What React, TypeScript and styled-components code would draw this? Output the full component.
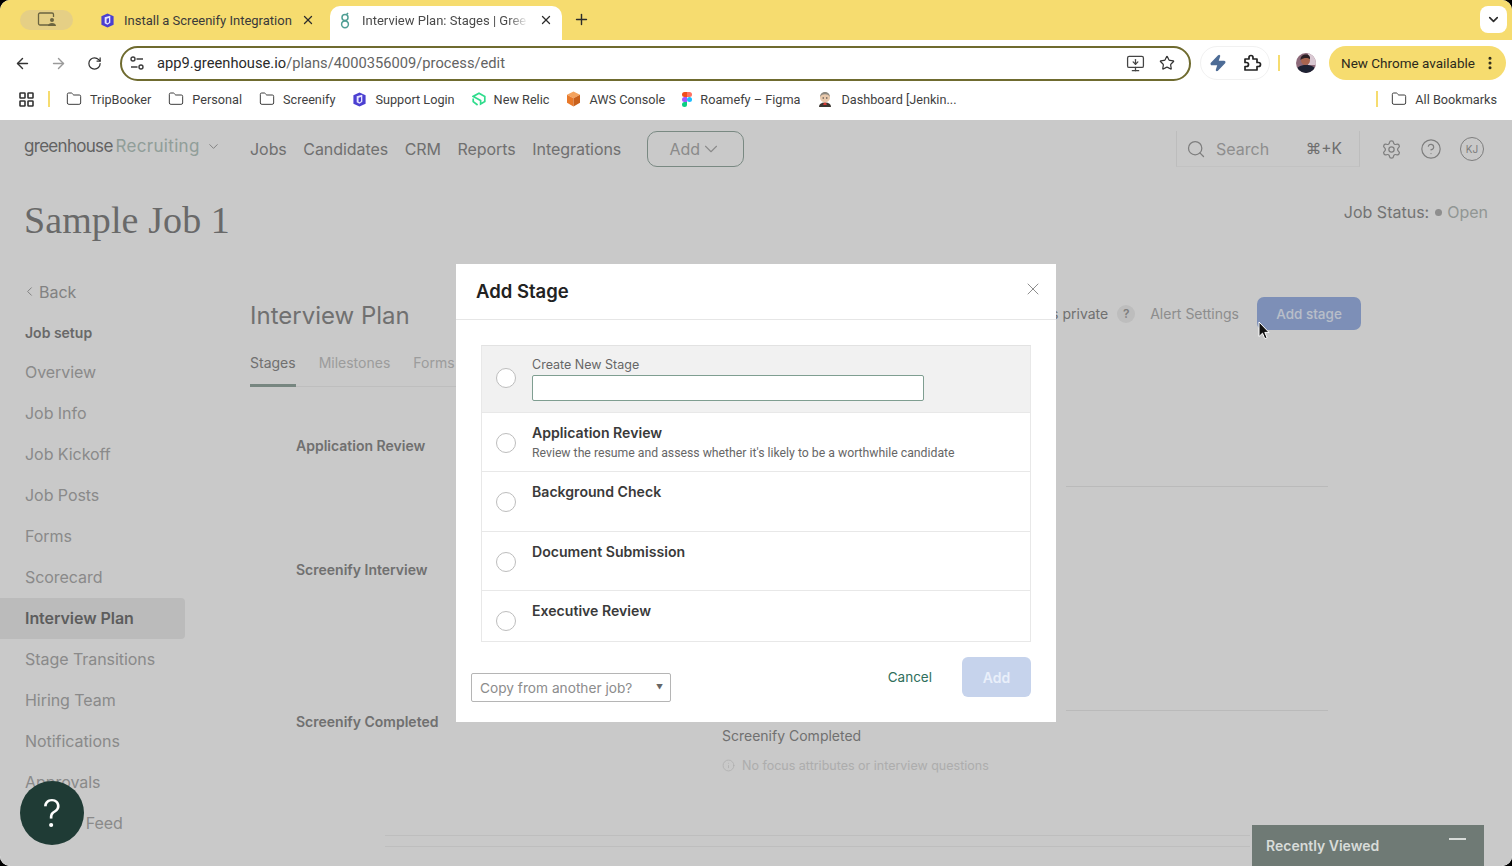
import styled, { createGlobalStyle } from 'styled-components';
import {
  ArrowLeft,
  ArrowRight,
  ChevronDown,
  ChevronLeft,
  CircleHelp,
  EllipsisVertical,
  Folder,
  Info,
  MonitorDown,
  Plus,
  RotateCw,
  Search,
  Settings,
  Star,
  X,
  Zap,
} from 'lucide-react';

const SIDEBAR_ITEMS = [
  'Overview',
  'Job Info',
  'Job Kickoff',
  'Job Posts',
  'Forms',
  'Scorecard',
  'Interview Plan',
  'Stage Transitions',
  'Hiring Team',
  'Notifications',
  'Approvals',
  'Activity Feed',
];

const STAGE_OPTIONS = [
  { name: 'Application Review', hint: "Review the resume and assess whether it's likely to be a worthwhile candidate" },
  { name: 'Background Check' },
  { name: 'Document Submission' },
  { name: 'Executive Review' },
];

function ScreenifyLogo({ size = 15 }: { size?: number }) {
  return (
    <svg width={size} height={size} viewBox="0 0 16 16">
      <path d="M8 .5 14.5 3.5v9L8 15.5 1.5 12.5v-9z" fill="#4b3fd1" />
      <path d="M5 4.5 11 3v7.5L8 12.5 5 11z" fill="#e6e4ff" />
      <path d="M7 6 9.6 5.3v4.6L8 11 7 10.3z" fill="#4b3fd1" />
    </svg>
  );
}

function GreenhouseMark() {
  return (
    <svg width="12" height="17" viewBox="0 0 12 17" fill="none" stroke="#4f9e94" strokeWidth="1.5">
      <circle cx="6" cy="5.5" r="3" />
      <circle cx="6" cy="12.3" r="3.4" />
      <path d="M7.6 2.6 9 1" />
    </svg>
  );
}

function TuneIcon() {
  return (
    <svg width="16" height="14" viewBox="0 0 16 14" fill="none" stroke="#3c3c3c" strokeWidth="1.4">
      <circle cx="4" cy="3" r="2" />
      <path d="M7.5 3H14" />
      <circle cx="12" cy="11" r="2" />
      <path d="M2 11h6.5" />
    </svg>
  );
}

function AppsIcon() {
  return (
    <svg width="15" height="15" viewBox="0 0 15 15" fill="none" stroke="#333" strokeWidth="1.6">
      <rect x="1" y="1" width="5" height="5" rx=".6" />
      <rect x="9" y="1" width="5" height="5" rx=".6" />
      <rect x="1" y="9" width="5" height="5" rx=".6" />
      <rect x="9" y="9" width="5" height="5" rx=".6" />
    </svg>
  );
}

function NewRelicLogo() {
  return (
    <svg width="14" height="15" viewBox="0 0 14 15" fill="none" stroke="#2fdc8c" strokeWidth="1.7">
      <path d="M7 1.2 12.8 4.4v5.2L8.6 12V8.4L5 6.4 1.2 4.4zM1.2 6.6v3l4.4 3.4" />
    </svg>
  );
}

function AwsLogo() {
  return (
    <svg width="15" height="16" viewBox="0 0 15 16">
      <path d="M7.5.5 14 3.8 7.5 7.2 1 3.8z" fill="#f4a35e" />
      <path d="M1 3.8v8l6.5 3.7V7.2z" fill="#e8792a" />
      <path d="M14 3.8v8l-6.5 3.7V7.2z" fill="#c9611c" />
    </svg>
  );
}

function FigmaLogo() {
  return (
    <svg width="10" height="15" viewBox="0 0 10 15">
      <path d="M5 0H2.5a2.5 2.5 0 0 0 0 5H5z" fill="#f24e1e" />
      <path d="M5 0h2.5a2.5 2.5 0 0 1 0 5H5z" fill="#ff7262" />
      <path d="M5 5H2.5a2.5 2.5 0 0 0 0 5H5z" fill="#a259ff" />
      <circle cx="7.5" cy="7.5" r="2.5" fill="#1abcfe" />
      <path d="M5 10H2.5A2.5 2.5 0 1 0 5 12.5z" fill="#0acf83" />
    </svg>
  );
}

function JenkinsLogo() {
  return (
    <svg width="16" height="16" viewBox="0 0 16 16">
      <path d="M2 16c0-3 2-4.500 6-4.500s6 1.500 6 4.500z" fill="#3a3530" />
      <path d="M7 11.500h2l.8 2.500H6.200z" fill="#d33833" />
      <circle cx="8" cy="6.500" r="5" fill="#e9c9ac" />
      <path d="M3.200 6C3 2.500 5.500 1 8 1s5 1.500 4.800 5c-1-2-2.500-2.700-4.800-2.700S4.200 4 3.200 6z" fill="#8c8880" />
      <circle cx="6.200" cy="7" r=".7" fill="#333" />
      <circle cx="9.800" cy="7" r=".7" fill="#333" />
    </svg>
  );
}

function ProfileWindowIcon() {
  return (
    <svg width="20" height="16" viewBox="0 0 20 16" fill="none">
      <path d="M12 13H3a1.500 1.500 0 0 1-1.500-1.500v-9A1.500 1.500 0 0 1 3 1h12a1.500 1.500 0 0 1 1.500 1.500V5" stroke="#6b6440" strokeWidth="1.300" />
      <circle cx="15" cy="8" r="2" fill="#6b6440" />
      <path d="M11 14c0-2 1.800-3 4-3s4 1 4 3z" fill="#6b6440" />
    </svg>
  );
}

function ExtensionIcon() {
  return (
    <svg width="20" height="20" viewBox="0 0 20 20" fill="none" stroke="#222" strokeWidth="1.700" strokeLinejoin="round">
      <path d="M3 6h4V4.500a2 2 0 0 1 4 0V6h4v3.500h1.500a2 2 0 0 1 0 4H15V17H3v-3.500h1.500a2 2 0 0 0 0-4H3z" />
    </svg>
  );
}

function Avatar() {
  return (
    <svg width="20" height="20" viewBox="0 0 20 20">
      <defs>
        <clipPath id="avatar-clip">
          <circle cx="10" cy="10" r="10" />
        </clipPath>
      </defs>
      <g clipPath="url(#avatar-clip)">
        <rect width="20" height="20" fill="#8d6a7a" />
        <rect x="12" width="8" height="12" fill="#d9c8d2" />
        <circle cx="9.500" cy="7.500" r="4.500" fill="#a8654f" />
        <path d="M4.500 7C4.500 3 7 1.500 10 1.500S14.500 3.500 14 6.500C12 4.500 8 4.500 4.500 7z" fill="#2b2024" />
        <path d="M0 20c0-6 4-8 10-8s10 2 10 8z" fill="#1d2233" />
      </g>
    </svg>
  );
}

function Pointer() {
  return (
    <svg width="12" height="19" viewBox="0 0 12 19">
      <path d="M1 1v14.500l3.500-3.300 2.300 5.500 2.300-1-2.300-5.300H11z" fill="#111" stroke="#fff" strokeWidth="1" />
    </svg>
  );
}

export default function App() {
  return (
    <>
      <GlobalStyle />
      <Frame>
        <TabStrip>
          <ProfilePill>
            <ProfileWindowIcon />
          </ProfilePill>
          <Tab>
            <ScreenifyLogo />
            <TabTitle>Install a Screenify Integration</TabTitle>
            <X size={14} strokeWidth={2.2} />
          </Tab>
          <Tab $active>
            <GreenhouseMark />
            <TabTitle $active>Interview Plan: Stages | Gree</TabTitle>
            <X size={14} strokeWidth={2.2} />
          </Tab>
          <NewTab>
            <Plus size={17} strokeWidth={2} />
          </NewTab>
          <TabSearch>
            <ChevronDown size={15} strokeWidth={2.6} />
          </TabSearch>
        </TabStrip>

        <Toolbar>
          <NavIcon><ArrowLeft size={17} strokeWidth={2} /></NavIcon>
          <NavIcon $muted><ArrowRight size={17} strokeWidth={2} /></NavIcon>
          <NavIcon><RotateCw size={15} strokeWidth={2} /></NavIcon>
          <Omnibox>
            <TuneIcon />
            <Url>
              app9.greenhouse.io<UrlPath>/plans/4000356009/process/edit</UrlPath>
            </Url>
            <MonitorDown size={19} strokeWidth={1.6} color="#444" />
            <Star size={16} strokeWidth={1.8} color="#333" />
          </Omnibox>
          <ExtensionPill>
            <Zap size={18} fill="#4d6c96" color="#4d6c96" />
            <ExtensionIcon />
          </ExtensionPill>
          <ToolbarDivider />
          <Avatar />
          <UpdateButton>
            New Chrome available
            <EllipsisVertical size={16} strokeWidth={2.6} />
          </UpdateButton>
        </Toolbar>

        <Bookmarks>
          <AppsIcon />
          <BookmarkDivider />
          <Bookmark><Folder size={16} strokeWidth={1.5} />TripBooker</Bookmark>
          <Bookmark><Folder size={16} strokeWidth={1.5} />Personal</Bookmark>
          <Bookmark><Folder size={16} strokeWidth={1.5} />Screenify</Bookmark>
          <Bookmark><ScreenifyLogo />Support Login</Bookmark>
          <Bookmark><NewRelicLogo />New Relic</Bookmark>
          <Bookmark><AwsLogo />AWS Console</Bookmark>
          <Bookmark><FigmaLogo />Roamefy – Figma</Bookmark>
          <Bookmark><JenkinsLogo />Dashboard [Jenkin...</Bookmark>
          <BookmarkSpacer />
          <BookmarkDivider $tight />
          <Bookmark><Folder size={16} strokeWidth={1.5} />All Bookmarks</Bookmark>
        </Bookmarks>

        <Page>
          <TopNav>
            <Brand>
              <BrandName>greenhouse</BrandName>
              <BrandProduct>Recruiting</BrandProduct>
              <ChevronDown size={15} strokeWidth={1.4} color="#999" />
            </Brand>
            <NavLinks>
              <NavLink>Jobs</NavLink>
              <NavLink>Candidates</NavLink>
              <NavLink>CRM</NavLink>
              <NavLink>Reports</NavLink>
              <NavLink>Integrations</NavLink>
            </NavLinks>
            <AddMenu>
              Add
              <ChevronDown size={22} strokeWidth={1.2} />
            </AddMenu>
            <NavRight>
              <SearchBox>
                <Search size={20} strokeWidth={1.5} />
                <SearchLabel>Search</SearchLabel>
                <SearchKeys>⌘+K</SearchKeys>
              </SearchBox>
              <Settings size={21} strokeWidth={1.4} />
              <CircleHelp size={22} strokeWidth={1.3} />
              <Initials>KJ</Initials>
            </NavRight>
          </TopNav>

          <JobHeader>
            <JobTitle>Sample Job 1</JobTitle>
            <JobStatus>
              Job Status:
              <StatusDot />
              <StatusValue>Open</StatusValue>
            </JobStatus>
          </JobHeader>

          <Body>
            <Sidebar>
              <BackLink>
                <ChevronLeft size={15} strokeWidth={1.6} />
                Back
              </BackLink>
              <SideHeading>Job setup</SideHeading>
              {SIDEBAR_ITEMS.map((item) => (
                <SideItem key={item} $active={item === 'Interview Plan'}>{item}</SideItem>
              ))}
            </Sidebar>

            <Content>
              <PlanHeader>
                <PlanTitle>Interview Plan</PlanTitle>
                <PlanActions>
                  <PrivateLabel>Interview plans private</PrivateLabel>
                  <QuestionBadge>?</QuestionBadge>
                  <AlertLink>Alert Settings</AlertLink>
                  <AddStageButton>Add stage</AddStageButton>
                </PlanActions>
              </PlanHeader>

              <Tabs>
                <PlanTab $active>Stages</PlanTab>
                <PlanTab>Milestones</PlanTab>
                <PlanTab>Forms</PlanTab>
              </Tabs>

              <StageRow $height={124}>
                <StageName>Application Review</StageName>
                <StageDetail>
                  <StageRule $top={50} />
                </StageDetail>
              </StageRow>
              <StageRow $height={152}>
                <StageName>Screenify Interview</StageName>
                <StageDetail />
              </StageRow>
              <StageRow $height={172}>
                <StageName>Screenify Completed</StageName>
                <StageDetail>
                  <StageRule $top={-2} />
                  <DetailTitle>Screenify Completed</DetailTitle>
                  <DetailNote>
                    <Info size={13} strokeWidth={1.4} />
                    No focus attributes or interview questions
                  </DetailNote>
                </StageDetail>
              </StageRow>
              <FootRule />
              <FootRule />
            </Content>
          </Body>

          <Scrim>
            <Modal>
              <ModalHeader>
                <ModalTitle>Add Stage</ModalTitle>
                <X size={20} strokeWidth={1} color="#777" />
              </ModalHeader>
              <ModalBody>
                <StageList>
                  <StageOption $new>
                    <Radio $new />
                    <OptionText>
                      <NewStageLabel>Create New Stage</NewStageLabel>
                      <NewStageInput />
                    </OptionText>
                  </StageOption>
                  {STAGE_OPTIONS.map((option) => (
                    <StageOption key={option.name}>
                      <Radio />
                      <OptionText>
                        <OptionName>{option.name}</OptionName>
                        {option.hint && <OptionHint>{option.hint}</OptionHint>}
                      </OptionText>
                    </StageOption>
                  ))}
                </StageList>
                <ModalFooter>
                  <CopySelect>
                    Copy from another job?
                    <SelectCaret>▼</SelectCaret>
                  </CopySelect>
                  <CancelLink>Cancel</CancelLink>
                  <ModalAdd>Add</ModalAdd>
                </ModalFooter>
              </ModalBody>
            </Modal>
          </Scrim>

          <CursorMark>
            <Pointer />
          </CursorMark>
          <HelpFab>?</HelpFab>
          <RecentlyViewed>
            Recently Viewed
            <MinimizeBar />
          </RecentlyViewed>
        </Page>
      </Frame>
    </>
  );
}

const GlobalStyle = createGlobalStyle`
  html, body {
    margin: 0;
    height: 100%;
    background: #000;
    overflow: hidden;
  }
  * { box-sizing: border-box; }
`;

const Frame = styled.div`
  width: 1512px;
  height: 866px;
  border-radius: 10px;
  overflow: hidden;
  display: flex;
  flex-direction: column;
  background: #fff;
  font-family: Inter, "Liberation Sans", sans-serif;
`;

const TabStrip = styled.div`
  height: 40px;
  flex-shrink: 0;
  background: #f6dc6f;
  display: flex;
  align-items: flex-end;
  padding-left: 20px;
  color: #2c2c2c;
`;

const ProfilePill = styled.div`
  width: 53px;
  height: 20px;
  margin-bottom: 10px;
  margin-right: 21px;
  border-radius: 10px;
  background: #e5cf85;
  display: flex;
  align-items: center;
  justify-content: center;
`;

const Tab = styled.div<{ $active?: boolean }>`
  width: ${(p) => (p.$active ? '232px' : '236px')};
  height: 34px;
  display: flex;
  align-items: center;
  gap: ${(p) => (p.$active ? '11px' : '9px')};
  padding: ${(p) => (p.$active ? '0 9px 6px 9px' : '0 15px 6px 6px')};
  border-radius: 10px 10px 0 0;
  background: ${(p) => (p.$active ? '#fff' : 'transparent')};
`;

const TabTitle = styled.span<{ $active?: boolean }>`
  flex: 1;
  min-width: 0;
  white-space: nowrap;
  font-family: Roboto, "Liberation Sans", sans-serif;
  font-size: 13px;
  color: ${(p) => (p.$active ? '#4a4a4a' : '#3a3a3a')};
  ${(p) => p.$active && 'mask-image: linear-gradient(to right, #000 88%, transparent 100%);'}
`;

const NewTab = styled.div`
  margin: 0 auto 12px 11px;
  display: flex;
`;

const TabSearch = styled.div`
  width: 27px;
  height: 27px;
  margin: 0 5px 7px 0;
  border-radius: 8px;
  background: #fff;
  display: flex;
  align-items: center;
  justify-content: center;
`;

const Toolbar = styled.div`
  height: 46px;
  flex-shrink: 0;
  display: flex;
  align-items: center;
  padding: 0 6px 0 4px;
  background: #fff;
`;

const NavIcon = styled.div<{ $muted?: boolean }>`
  width: 36px;
  display: flex;
  justify-content: center;
  color: ${(p) => (p.$muted ? '#9a9a9a' : '#333')};
`;

const Omnibox = styled.div`
  width: 1071px;
  height: 35px;
  margin-left: 8px;
  display: flex;
  align-items: center;
  gap: 14px;
  padding: 0 14px 0 7px;
  border: 2px solid #6f6b2f;
  border-radius: 18px;
`;

const Url = styled.div`
  flex: 1;
  margin-left: -2px;
  font-family: Roboto, "Liberation Sans", sans-serif;
  font-size: 14.7px;
  color: #2a2a2a;
`;

const UrlPath = styled.span`
  color: #636363;
`;

const ExtensionPill = styled.div`
  width: 70px;
  height: 34px;
  margin-left: 9px;
  display: flex;
  align-items: center;
  justify-content: space-between;
  padding: 0 7px 0 8px;
  border: 1px solid #f1f1f1;
  border-radius: 17px;
`;

const ToolbarDivider = styled.div`
  width: 2px;
  height: 16px;
  margin: 0 16px 0 8px;
  background: #f6dc6f;
`;

const UpdateButton = styled.div`
  width: 177px;
  height: 34px;
  margin-left: 13px;
  display: flex;
  align-items: center;
  justify-content: space-between;
  padding: 0 8px 0 12px;
  border-radius: 17px;
  background: #f6dc6f;
  font-family: Roboto, "Liberation Sans", sans-serif;
  font-size: 13.5px;
  color: #2c2a1c;
`;

const Bookmarks = styled.div`
  height: 34px;
  flex-shrink: 0;
  display: flex;
  align-items: center;
  padding: 0 15px 8px 19px;
  background: #fff;
  color: #444;
`;

const BookmarkDivider = styled.div<{ $tight?: boolean }>`
  width: 2px;
  height: 16px;
  margin: ${(p) => (p.$tight ? '0 13px 0 0' : '0 16px 0 14px')};
  background: #f6dc6f;
`;

const Bookmark = styled.div`
  display: flex;
  align-items: center;
  gap: 8px;
  margin-right: 17px;
  white-space: nowrap;
  font-family: Roboto, "Liberation Sans", sans-serif;
  font-size: 12.7px;
  color: #3f3f3f;

  &:last-child { margin-right: 0; }
`;

const BookmarkSpacer = styled.div`
  flex: 1;
`;

const Page = styled.div`
  position: relative;
  flex: 1;
  min-height: 0;
  overflow: hidden;
  background: #fff;
`;

const TopNav = styled.header`
  height: 58px;
  display: flex;
  align-items: center;
  padding-left: 24px;
  color: #8a8a8a;
`;

const Brand = styled.div`
  width: 226px;
  display: flex;
  align-items: center;
  gap: 3px;
  margin-top: -6px;
  font-size: 17px;
`;

const BrandName = styled.span`
  letter-spacing: -0.7px;
  color: #7d7d7d;
`;

const BrandProduct = styled.span`
  letter-spacing: 0.3px;
  color: #b7c9c2;
  margin-right: 3px;
`;

const NavLinks = styled.nav`
  display: flex;
  gap: 16.5px;
`;

const NavLink = styled.a`
  font-size: 16px;
  letter-spacing: -0.05px;
  color: #8e8e8e;
`;

const AddMenu = styled.div`
  width: 97px;
  height: 36px;
  margin-left: 26px;
  display: flex;
  align-items: center;
  justify-content: center;
  border: 1px solid #9aaea6;
  border-radius: 10px;
  font-size: 16px;
  color: #b0b0b0;
`;

const NavRight = styled.div`
  margin-left: auto;
  padding-right: 28px;
  display: flex;
  align-items: center;
  gap: 18px;
  color: #a0a0a0;
`;

const SearchBox = styled.div`
  width: 184px;
  height: 36px;
  margin-right: 3px;
  display: flex;
  align-items: center;
  padding: 0 17px 0 9px;
  border-left: 1px solid #f0f0f0;
  border-right: 1px solid #f0f0f0;
  border-bottom: 1px solid #f6f6f6;
`;

const SearchLabel = styled.span`
  flex: 1;
  padding-left: 10px;
  font-size: 16px;
  color: #b4b4b4;
`;

const SearchKeys = styled.span`
  font-size: 15.5px;
  color: #8c8c8c;
`;

const Initials = styled.div`
  width: 24px;
  height: 24px;
  display: flex;
  align-items: center;
  justify-content: center;
  border: 1.2px solid #a0a0a0;
  border-radius: 50%;
  font-size: 10px;
`;

const JobHeader = styled.div`
  height: 93px;
  display: flex;
  justify-content: space-between;
  padding: 20px 24px 0 24px;
`;

const JobTitle = styled.h1`
  margin: 0;
  font-family: "Liberation Serif", serif;
  font-size: 38px;
  line-height: 44px;
  font-weight: 400;
  letter-spacing: 0.1px;
  color: #868686;
`;

const JobStatus = styled.div`
  display: flex;
  align-items: center;
  height: 28px;
  font-size: 16px;
  color: #939393;
`;

const StatusDot = styled.span`
  width: 7px;
  height: 7px;
  margin: 0 5px 0 6px;
  border-radius: 50%;
  background: #b4b4b4;
`;

const StatusValue = styled.span`
  color: #b9bfbc;
`;

const Body = styled.div`
  display: flex;
`;

const Sidebar = styled.aside`
  width: 185px;
  flex-shrink: 0;
`;

const BackLink = styled.div`
  height: 41px;
  display: flex;
  align-items: center;
  gap: 2px;
  padding-left: 22px;
  font-size: 16px;
  color: #a5a5a5;
`;

const SideHeading = styled.div`
  height: 40px;
  display: flex;
  align-items: center;
  padding-left: 25px;
  font-size: 14px;
  font-weight: 600;
  color: #868686;
`;

const SideItem = styled.div<{ $active?: boolean }>`
  height: 41px;
  display: flex;
  align-items: center;
  padding: 0 0 1px 25px;
  font-size: 16px;
  letter-spacing: -0.05px;
  white-space: nowrap;
  border-radius: 0 4px 4px 0;
  font-weight: ${(p) => (p.$active ? 600 : 400)};
  color: ${(p) => (p.$active ? '#767676' : '#afafaf')};
  background: ${(p) => (p.$active ? '#eeeeee' : 'transparent')};
`;

const Content = styled.main`
  width: 1111px;
  margin-left: 65px;
  flex-shrink: 0;
`;

const PlanHeader = styled.div`
  height: 59px;
  padding-top: 26px;
  display: flex;
  align-items: center;
  justify-content: space-between;
`;

const PlanTitle = styled.h2`
  margin: 3px 0 0;
  font-size: 24px;
  font-weight: 400;
  color: #8f8f8f;
`;

const PlanActions = styled.div`
  display: flex;
  align-items: center;
`;

const PrivateLabel = styled.span`
  font-size: 14px;
  color: #8e8e8e;
`;

const QuestionBadge = styled.span`
  width: 18px;
  height: 18px;
  margin: 0 15px 0 9px;
  display: flex;
  align-items: center;
  justify-content: center;
  border-radius: 50%;
  background: #f0f0f0;
  font-size: 12px;
  font-weight: 600;
  color: #a0a0a0;
`;

const AlertLink = styled.span`
  margin-right: 18px;
  font-size: 14px;
  color: #b3b3b3;
`;

const AddStageButton = styled.div`
  width: 104px;
  height: 33px;
  display: flex;
  align-items: center;
  justify-content: center;
  border-radius: 7px;
  background: #9fb6e8;
  font-size: 13.5px;
  font-weight: 500;
  color: #eaf1ff;
`;

const Tabs = styled.div`
  width: 700px;
  margin-top: 15px;
  display: flex;
  gap: 23px;
  border-bottom: 1px solid #f2f2f2;
`;

const PlanTab = styled.div<{ $active?: boolean }>`
  height: 42px;
  padding-top: 8px;
  line-height: 20px;
  font-size: 14px;
  margin-bottom: -1px;
  color: ${(p) => (p.$active ? '#8e8e8e' : '#c6c6c6')};
  border-bottom: 3px solid ${(p) => (p.$active ? '#97aaa3' : 'transparent')};
`;

const StageRow = styled.section<{ $height: number }>`
  height: ${(p) => p.$height}px;
  padding: 49px 0 0 46px;
  display: flex;
`;

const StageName = styled.div`
  width: 426px;
  flex-shrink: 0;
  height: 20px;
  line-height: 20px;
  font-size: 14px;
  font-weight: 600;
  color: #8e8e8e;
`;

const StageDetail = styled.div`
  flex: 1;
`;

const StageRule = styled.div<{ $top: number }>`
  width: 262px;
  height: 1px;
  margin: ${(p) => p.$top}px 0 0 344px;
  background: #ececec;
`;

const DetailTitle = styled.div`
  margin-top: 16px;
  font-size: 14px;
  color: #8f8f8f;
`;

const DetailNote = styled.div`
  margin-top: 14px;
  display: flex;
  align-items: center;
  gap: 7px;
  font-size: 12.5px;
  color: #dcdcdc;
`;

const FootRule = styled.div`
  height: 1px;
  margin: 0 111px 10px 135px;
  background: #f1f1f1;
`;

const Scrim = styled.div`
  position: absolute;
  inset: 0;
  display: flex;
  align-items: center;
  justify-content: center;
  background: rgba(0, 0, 0, 0.21);
  backdrop-filter: blur(0.7px);
`;

const Modal = styled.div`
  width: 600px;
  height: 458px;
  background: #fff;
`;

const ModalHeader = styled.div`
  height: 56px;
  display: flex;
  align-items: center;
  justify-content: space-between;
  padding: 0 13px 6px 20px;
  border-bottom: 1px solid #e6e6e6;
`;

const ModalTitle = styled.h3`
  margin: 4px 0 0;
  font-size: 18.5px;
  font-weight: 600;
  color: #222;
`;

const ModalBody = styled.div`
  padding: 25px 25px 0 15px;
`;

const StageList = styled.div`
  height: 297px;
  margin-left: 10px;
  overflow: hidden;
  border: 1px solid #e8e8e8;
  border-top-color: #e2e2e2;
`;

const StageOption = styled.div<{ $new?: boolean }>`
  height: ${(p) => (p.$new ? '67px' : '59.3px')};
  display: flex;
  align-items: ${(p) => (p.$new ? 'center' : 'flex-start')};
  padding: ${(p) => (p.$new ? '0 0 3px 14px' : '10px 0 0 14px')};
  background: ${(p) => (p.$new ? '#f1f1f1' : '#fff')};
  border-bottom: 1px solid #e8e8e8;
`;

const Radio = styled.span<{ $new?: boolean }>`
  width: 20px;
  height: 20px;
  margin: ${(p) => (p.$new ? '0 16px 0 0' : '10px 16px 0 0')};
  flex-shrink: 0;
  border: 1.5px solid #bdbdbd;
  border-radius: 50%;
  background: #fff;
`;

const OptionText = styled.div`
  flex: 1;
  min-width: 0;
`;

const NewStageLabel = styled.div`
  font-size: 12.5px;
  line-height: 20px;
  color: #666;
`;

const NewStageInput = styled.div`
  width: 392px;
  height: 26px;
  border: 1.5px solid #7f9e91;
  border-radius: 2px;
  background: #fff;
`;

const OptionName = styled.div`
  font-size: 14.1px;
  line-height: 20px;
  font-weight: 600;
  color: #3a3a3a;
`;

const OptionHint = styled.div`
  margin-top: 1px;
  font-family: Roboto, "Liberation Sans", sans-serif;
  font-size: 12.25px;
  line-height: 18px;
  color: #666;
`;

const ModalFooter = styled.div`
  height: 60px;
  margin-top: 15px;
  display: flex;
  align-items: flex-start;
`;

const CopySelect = styled.div`
  width: 200px;
  height: 29px;
  margin-top: 16px;
  display: flex;
  align-items: center;
  justify-content: space-between;
  padding: 0 7px 0 8px;
  border: 1px solid #b5b5b5;
  border-radius: 2px;
  font-size: 13.7px;
  color: #8c8c8c;
`;

const SelectCaret = styled.span`
  font-size: 7px;
  color: #666;
`;

const CancelLink = styled.span`
  margin: 10px 0 0 auto;
  line-height: 20px;
  font-size: 13.5px;
  color: #2f6f5c;
`;

const ModalAdd = styled.div`
  width: 69px;
  height: 40px;
  margin-left: 30px;
  display: flex;
  align-items: center;
  justify-content: center;
  border-radius: 6px;
  background: #c6d3ec;
  font-size: 14px;
  font-weight: 600;
  color: #e9effa;
`;

const CursorMark = styled.div`
  position: absolute;
  left: 1258px;
  top: 201px;
  line-height: 0;
`;

const HelpFab = styled.div`
  position: absolute;
  left: 20px;
  bottom: 21px;
  width: 64px;
  height: 64px;
  display: flex;
  align-items: center;
  justify-content: center;
  border-radius: 50%;
  background: #1f3b35;
  font-size: 38px;
  font-weight: 300;
  color: #fff;
`;

const RecentlyViewed = styled.div`
  position: absolute;
  left: 1252px;
  bottom: 0;
  width: 232px;
  height: 41px;
  display: flex;
  align-items: center;
  justify-content: space-between;
  padding: 0 18px 0 14px;
  background: #6f7a75;
  font-size: 14px;
  font-weight: 600;
  color: #d8dcd9;
`;

const MinimizeBar = styled.span`
  width: 17px;
  height: 2px;
  margin-bottom: 14px;
  background: #d8dcd9;
`;
